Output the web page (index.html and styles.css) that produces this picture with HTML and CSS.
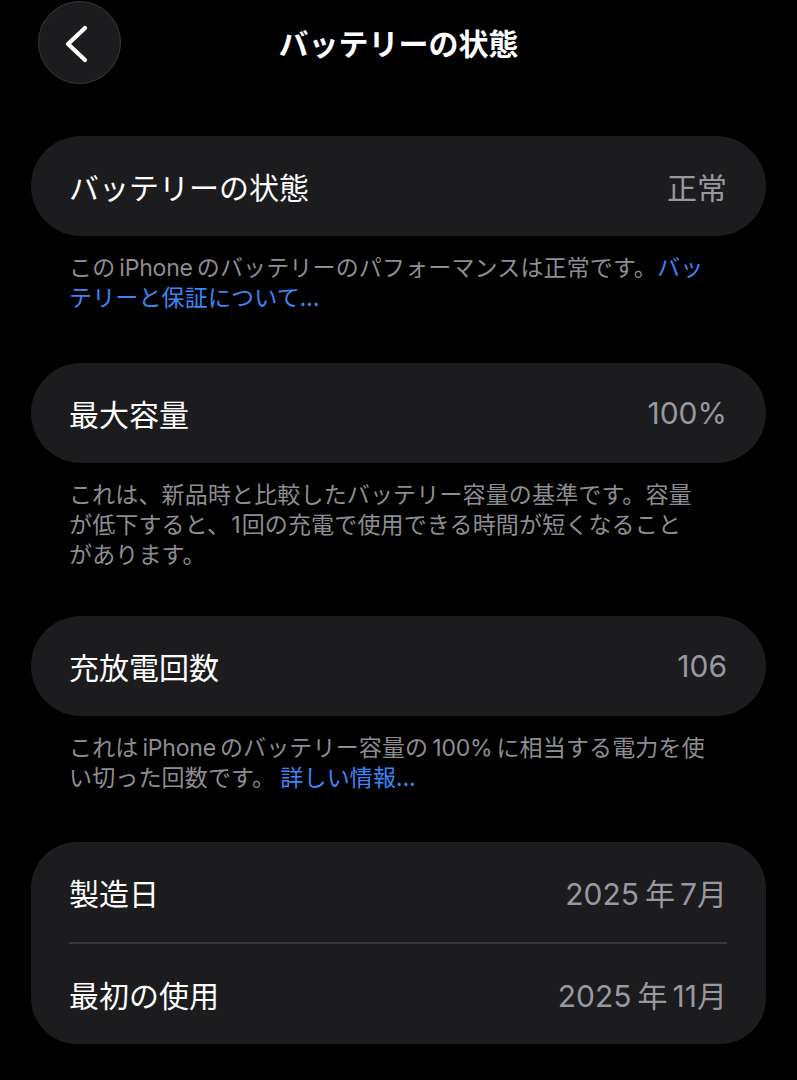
FILE: index.html
```html
<!DOCTYPE html>
<html lang="ja">
<head>
<meta charset="utf-8">
<title>バッテリーの状態</title>
<link rel="stylesheet" href="styles.css">
</head>
<body>
<header class="nav">
  <div class="nav-left">
    <button class="back" aria-label="戻る">
      <svg width="83" height="83" viewBox="0 0 83 83">
        <path d="M47 27 L30 43 L47 59" fill="none" stroke="#ffffff" stroke-width="4.2" stroke-linecap="round" stroke-linejoin="round"/>
      </svg>
    </button>
  </div>
  <h1 class="nav-title">バッテリーの状態</h1>
  <div class="nav-right"></div>
</header>

<main class="content">
  <section class="group g1">
    <div class="card">
      <div class="row"><span class="label">バッテリーの状態</span><span class="value">正常</span></div>
    </div>
    <p class="note">この<span class="latin">iPhone</span>のバッテリーのパフォーマンスは正常です。<a class="link">バッ<br>テリーと保証について...</a></p>
  </section>

  <section class="group g2">
    <div class="card">
      <div class="row"><span class="label">最大容量</span><span class="value num">100%</span></div>
    </div>
    <p class="note">これは、新品時と比較したバッテリー容量の基準です。容量<br>が低下すると、<span class="digit">1</span>回の充電で使用できる時間が短くなること<br>があります。</p>
  </section>

  <section class="group g3">
    <div class="card">
      <div class="row"><span class="label">充放電回数</span><span class="value num">106</span></div>
    </div>
    <p class="note">これは<span class="latin">iPhone</span>のバッテリー容量の<span class="latin">100%</span>に相当する電力を使<br>い切った回数です。 <a class="link">詳しい情報...</a></p>
  </section>

  <section class="group g4">
    <div class="card card-list">
      <div class="row"><span class="label">製造日</span><span class="value"><span class="num sp">2025</span>年<span class="num sp-l">7</span>月</span></div>
      <div class="divider"></div>
      <div class="row"><span class="label">最初の使用</span><span class="value"><span class="num sp">2025</span>年<span class="num sp-l">11</span>月</span></div>
    </div>
  </section>
</main>
</body>
</html>
```

FILE: styles.css
```css
html, body {
  margin: 0;
  padding: 0;
  background: #000000;
}

body {
  width: 797px;
  min-height: 1080px;
  color: #ffffff;
  font-family: Inter, "Noto Sans CJK JP", sans-serif;
  -webkit-font-smoothing: antialiased;
}

.nav {
  display: grid;
  grid-template-columns: 1fr auto 1fr;
  align-items: center;
  height: 84px;
}

.nav-left {
  display: flex;
  padding-left: 38px;
}

.back {
  width: 83px;
  height: 83px;
  padding: 0;
  margin: 0;
  border-radius: 50%;
  background: #1c1c1e;
  border: 1px solid #38383b;
  box-sizing: border-box;
  display: flex;
  align-items: center;
  justify-content: center;
}

.back svg {
  display: block;
  margin: -1px;
}

.nav-title {
  margin: 0;
  font-size: 30px;
  font-weight: 700;
  line-height: 40px;
  font-family: "Noto Sans CJK JP", sans-serif;
}

.content {
  padding: 0 31px;
}

.group.g1 {
  margin-top: 52px;
}

.group.g2 {
  margin-top: 52px;
}

.group.g3 {
  margin-top: 48px;
}

.group.g4 {
  margin-top: 51px;
}

.card {
  background: #1c1c1e;
  border-radius: 50px;
  padding: 0 39px 0 38px;
}

.card-list {
  border-radius: 46px;
}

.row {
  height: 100px;
  display: flex;
  align-items: center;
  justify-content: space-between;
  font-size: 30px;
  line-height: 40px;
}

.label {
  color: #ffffff;
  font-family: "Noto Sans CJK JP", sans-serif;
}

.value {
  color: #98989f;
  font-family: "Noto Sans CJK JP", sans-serif;
}

.num {
  font-family: Inter, "Noto Sans CJK JP", sans-serif;
  font-weight: 400;
  line-height: 1;
}

.num.sp {
  margin-right: 6px;
}

.num.sp-l {
  margin-left: 5px;
}

.divider {
  height: 2px;
  background: #38383a;
}

.note {
  margin: 0;
  padding: 15px 38px 0;
  font-size: 23px;
  line-height: 30px;
  letter-spacing: 0.15px;
  color: #8d8d93;
  font-family: "Noto Sans CJK JP", sans-serif;
  white-space: nowrap;
}

.latin {
  font-family: Inter, sans-serif;
  margin: 0 4px;
  letter-spacing: -0.2px;
  line-height: 1;
}

.digit {
  font-family: Inter, sans-serif;
  margin: 0 1px;
  line-height: 1;
}

.link {
  color: #3d86f5;
  text-decoration: none;
}
```
